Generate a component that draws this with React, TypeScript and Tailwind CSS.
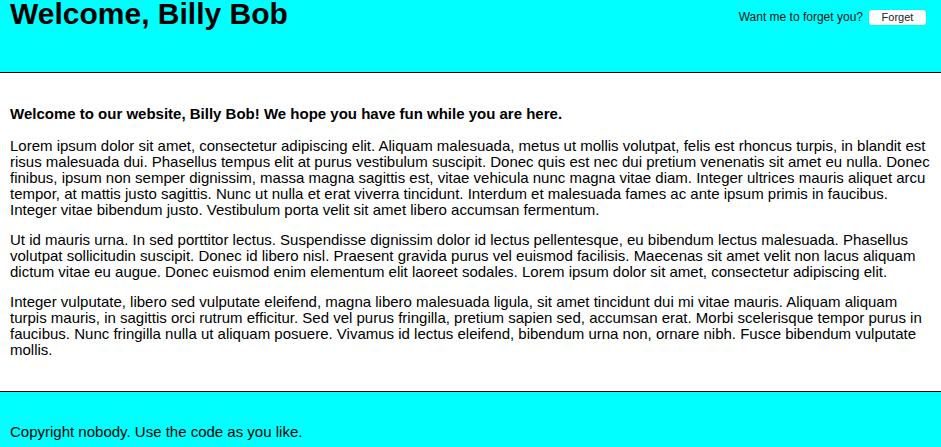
export default function App() {
  return (
    <div className="font-['Liberation_Sans',Arial,sans-serif] text-[15px] leading-[16px] text-black bg-white">
      <header className="h-[73px] bg-[#00ffff] border-b border-black flex justify-between px-[10px]">
        <h1 className="text-[30px] leading-[28px] font-bold">Welcome, Billy Bob</h1>
        <div className="flex items-start gap-[6px] mt-[10px] mr-[5px]">
          <span className="text-[12px] leading-[15px] text-[#111]">Want me to forget you?</span>
          <button className="w-[57px] h-[15px] bg-white rounded-[3px] text-[11px] leading-[15px] text-[#222] shadow-[0_0_1px_rgba(0,0,0,0.3)]">Forget</button>
        </div>
      </header>
      <main className="px-[10px] pt-[33px] pb-[33px]">
        <p className="font-bold">Welcome to our website, Billy Bob! We hope you have fun while you are here.</p>
        <p className="mt-[16px]">
          Lorem ipsum dolor sit amet, consectetur adipiscing elit. Aliquam malesuada, metus ut mollis volutpat, felis est rhoncus turpis, in blandit est risus malesuada dui. Phasellus tempus elit at purus vestibulum suscipit. Donec quis est nec dui pretium venenatis sit amet eu nulla. Donec finibus, ipsum non semper dignissim, massa magna sagittis est, vitae vehicula nunc magna vitae diam. Integer ultrices mauris aliquet arcu tempor, at mattis justo sagittis. Nunc ut nulla et erat viverra tincidunt. Interdum et malesuada fames ac ante ipsum primis in faucibus. Integer vitae bibendum justo. Vestibulum porta velit sit amet libero accumsan fermentum.
        </p>
        <p className="mt-[14px]">
          Ut id mauris urna. In sed porttitor lectus. Suspendisse dignissim dolor id lectus pellentesque, eu bibendum lectus malesuada. Phasellus volutpat sollicitudin suscipit. Donec id libero nisl. Praesent gravida purus vel euismod facilisis. Maecenas sit amet velit non lacus aliquam dictum vitae eu augue. Donec euismod enim elementum elit laoreet sodales. Lorem ipsum dolor sit amet, consectetur adipiscing elit.
        </p>
        <p className="mt-[14px]">
          Integer vulputate, libero sed vulputate eleifend, magna libero malesuada ligula, sit amet tincidunt dui mi vitae mauris. Aliquam aliquam turpis mauris, in sagittis orci rutrum efficitur. Sed vel purus fringilla, pretium sapien sed, accumsan erat. Morbi scelerisque tempor purus in faucibus. Nunc fringilla nulla ut aliquam posuere. Vivamus id lectus eleifend, bibendum urna non, ornare nibh. Fusce bibendum vulputate mollis.
        </p>
      </main>
      <footer className="bg-[#00ffff] border-t border-black px-[10px] pt-[32px] pb-[33px]">
        <p>Copyright nobody. Use the code as you like.</p>
      </footer>
    </div>
  );
}
